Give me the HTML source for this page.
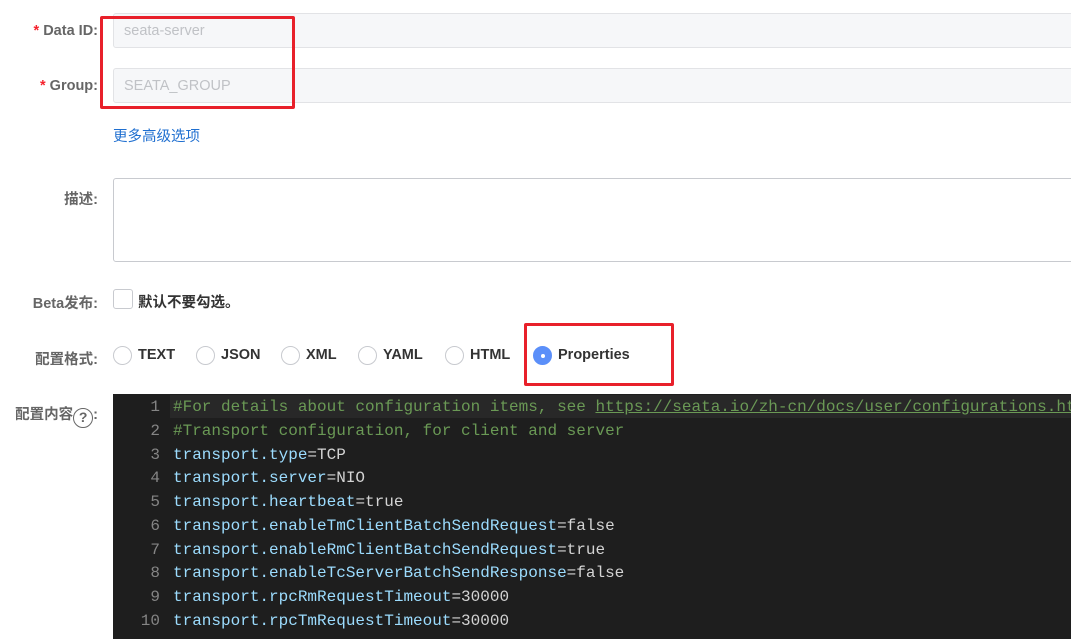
<!DOCTYPE html>
<html><head><meta charset="utf-8"><style>
*{margin:0;padding:0;box-sizing:border-box}
body{width:1071px;height:637px;overflow:hidden;background:#fff;font-family:"Liberation Sans","Noto Sans CJK SC",sans-serif;position:relative}
.a{position:absolute}
.lbl{position:absolute;right:973px;font-size:14.5px;color:#666;font-weight:bold;white-space:nowrap}
.star{color:#f5222d;margin-right:4px}
.inp{position:absolute;left:113px;width:970px;background:#f6f7f9;border:1px solid #e2e3e6;border-radius:3px;font-size:14.5px;color:#c0c2c6;padding-left:10px}
.red{position:absolute;border:3px solid #e8202a;border-radius:2px}
.rad{position:absolute;top:346px;width:19px;height:19px;border:1px solid #c8cacf;border-radius:50%;background:#fff}
.rt{position:absolute;top:347px;font-size:14.5px;font-weight:bold;color:#333}
.ed{position:absolute;left:113px;top:394px;width:960px;height:245px;background:#1e1e1e;font-family:"Liberation Mono",monospace;font-size:16px;overflow:hidden}
.ln{position:absolute;left:0;width:47px;text-align:right;color:#858585}
.cd{position:absolute;left:60px;white-space:pre}
.c{color:#6a9955}.k{color:#9cdcfe}.v{color:#d4d4d4}
</style></head><body>
<div class="lbl" style="top:23px"><span class="star">*</span>Data ID:</div>
<div class="lbl" style="top:78px"><span class="star">*</span>Group:</div>
<div class="inp" style="top:13px;height:35px;line-height:35px">seata-server</div>
<div class="inp" style="top:68px;height:35px;line-height:35px">SEATA_GROUP</div>
<div class="red" style="left:100px;top:16px;width:195px;height:93px"></div>
<div class="a" style="left:113px;top:125px;font-size:14.5px;color:#1f6fd0">更多高级选项</div>
<div class="lbl" style="top:188px">描述:</div>
<div class="a" style="left:113px;top:178px;width:970px;height:84px;border:1px solid #c8cacf;border-radius:3px"></div>
<div class="lbl" style="top:292px">Beta发布:</div>
<div class="a" style="left:113px;top:289px;width:20px;height:20px;border:1px solid #c8cacf;border-radius:3px"></div>
<div class="a" style="left:138px;top:291px;font-size:14.5px;font-weight:bold;color:#333">默认不要勾选。</div>
<div class="lbl" style="top:348px">配置格式:</div>
<div class="rad" style="left:113px"></div><div class="rt" style="left:138px">TEXT</div>
<div class="rad" style="left:196px"></div><div class="rt" style="left:221px">JSON</div>
<div class="rad" style="left:281px"></div><div class="rt" style="left:306px">XML</div>
<div class="rad" style="left:358px"></div><div class="rt" style="left:383px">YAML</div>
<div class="rad" style="left:445px"></div><div class="rt" style="left:470px">HTML</div>
<div class="rad" style="left:533px;background:#5b8ff9;border-color:#5b8ff9"><div style="position:absolute;left:7px;top:7px;width:4px;height:4px;border-radius:50%;background:#fff"></div></div>
<div class="rt" style="left:558px">Properties</div>
<div class="red" style="left:524px;top:323px;width:150px;height:63px"></div>
<div class="lbl" style="top:403px">配置内容<span style="display:inline-block;width:20px;height:20px;border:1.5px solid #666;border-radius:50%;font-size:14px;text-align:center;line-height:17px;vertical-align:-3px">?</span>:</div>
<div class="ed">
<div class="a" style="left:57px;top:1px;width:910px;height:23px;background:#282828"></div>
<div class="ln" style="top:4px">1</div><div class="cd c" style="top:4px">#For details about configuration items, see <u>https://seata.io/zh-cn/docs/user/configurations.html</u></div>
<div class="ln" style="top:28px">2</div><div class="cd c" style="top:28px">#Transport configuration, for client and server</div>
<div class="ln" style="top:52px">3</div><div class="cd" style="top:52px"><span class="k">transport.type</span><span class="v">=TCP</span></div>
<div class="ln" style="top:75px">4</div><div class="cd" style="top:75px"><span class="k">transport.server</span><span class="v">=NIO</span></div>
<div class="ln" style="top:99px">5</div><div class="cd" style="top:99px"><span class="k">transport.heartbeat</span><span class="v">=true</span></div>
<div class="ln" style="top:123px">6</div><div class="cd" style="top:123px"><span class="k">transport.enableTmClientBatchSendRequest</span><span class="v">=false</span></div>
<div class="ln" style="top:147px">7</div><div class="cd" style="top:147px"><span class="k">transport.enableRmClientBatchSendRequest</span><span class="v">=true</span></div>
<div class="ln" style="top:170px">8</div><div class="cd" style="top:170px"><span class="k">transport.enableTcServerBatchSendResponse</span><span class="v">=false</span></div>
<div class="ln" style="top:194px">9</div><div class="cd" style="top:194px"><span class="k">transport.rpcRmRequestTimeout</span><span class="v">=30000</span></div>
<div class="ln" style="top:218px">10</div><div class="cd" style="top:218px"><span class="k">transport.rpcTmRequestTimeout</span><span class="v">=30000</span></div>
</div>
</body></html>
